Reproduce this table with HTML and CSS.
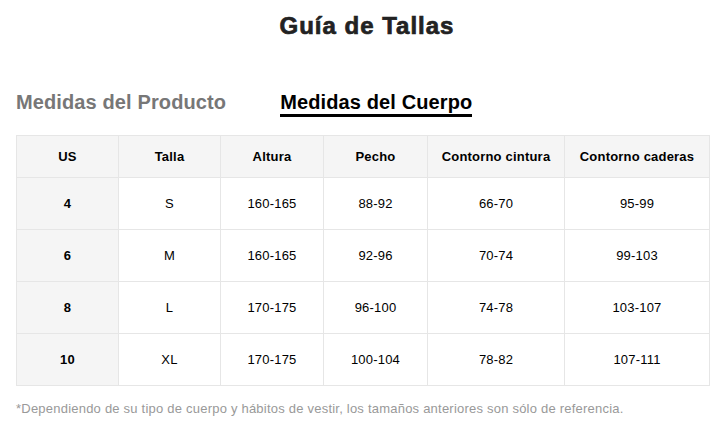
FILE: index.html
```html
<!DOCTYPE html>
<html lang="es">
<head>
<meta charset="utf-8">
<title>Guía de Tallas</title>
<link rel="stylesheet" href="styles.css">
</head>
<body>
<div class="page">
  <h1 class="title">Guía de Tallas</h1>
  <div class="tabs">
    <div class="tab">Medidas del Producto</div>
    <div class="tab active">Medidas del Cuerpo</div>
  </div>
  <table class="sizes">
    <colgroup>
      <col class="c1"><col class="c2"><col class="c3"><col class="c4"><col class="c5"><col class="c6">
    </colgroup>
    <thead>
      <tr><th>US</th><th>Talla</th><th>Altura</th><th>Pecho</th><th>Contorno cintura</th><th>Contorno caderas</th></tr>
    </thead>
    <tbody>
      <tr><th>4</th><td>S</td><td>160-165</td><td>88-92</td><td>66-70</td><td>95-99</td></tr>
      <tr><th>6</th><td>M</td><td>160-165</td><td>92-96</td><td>70-74</td><td>99-103</td></tr>
      <tr><th>8</th><td>L</td><td>170-175</td><td>96-100</td><td>74-78</td><td>103-107</td></tr>
      <tr><th>10</th><td>XL</td><td>170-175</td><td>100-104</td><td>78-82</td><td>107-111</td></tr>
    </tbody>
  </table>
  <p class="note">*Dependiendo de su tipo de cuerpo y hábitos de vestir, los tamaños anteriores son sólo de referencia.</p>
</div>
</body>
</html>
```

FILE: styles.css
```css
html, body {
  margin: 0;
  padding: 0;
  background: #fff;
}
body {
  font-family: "Liberation Sans", Arial, sans-serif;
  color: #000;
}
.page {
  padding: 0 18px 0 16px;
}
.title {
  margin: 0;
  padding-top: 12px;
  padding-left: 9px;
  font-size: 24px;
  line-height: 28px;
  font-weight: 700;
  text-align: center;
  color: #222;
  letter-spacing: 1px;
  -webkit-text-stroke: 0.7px #222;
}
.tabs {
  display: flex;
  gap: 54px;
  margin-top: 51px;
}
.tab {
  font-size: 20px;
  font-weight: 700;
  line-height: 23px;
  letter-spacing: 0.12px;
  color: #777;
  border-bottom: 3px solid transparent;
}
.tab.active {
  color: #000;
  border-bottom-color: #000;
}
.sizes {
  margin-top: 18px;
  width: 693px;
  border-collapse: collapse;
  table-layout: fixed;
  font-size: 13px;
  letter-spacing: 0.2px;
}
.c1 { width: 102px; }
.c2 { width: 102px; }
.c3 { width: 103px; }
.c4 { width: 104px; }
.c5 { width: 137px; }
.c6 { width: 145px; }
.sizes th, .sizes td {
  border: 1px solid #e6e6e6;
  text-align: center;
  padding: 0;
  color: #000;
}
.sizes thead th {
  height: 41px;
  background: #f5f5f5;
  font-weight: 700;
}
.sizes tbody th {
  background: #f5f5f5;
  font-weight: 700;
}
.sizes tbody td, .sizes tbody th {
  height: 51px;
}
.note {
  margin: 15px 0 0 0;
  font-size: 13px;
  line-height: 16px;
  letter-spacing: 0.22px;
  color: #999;
}
```
